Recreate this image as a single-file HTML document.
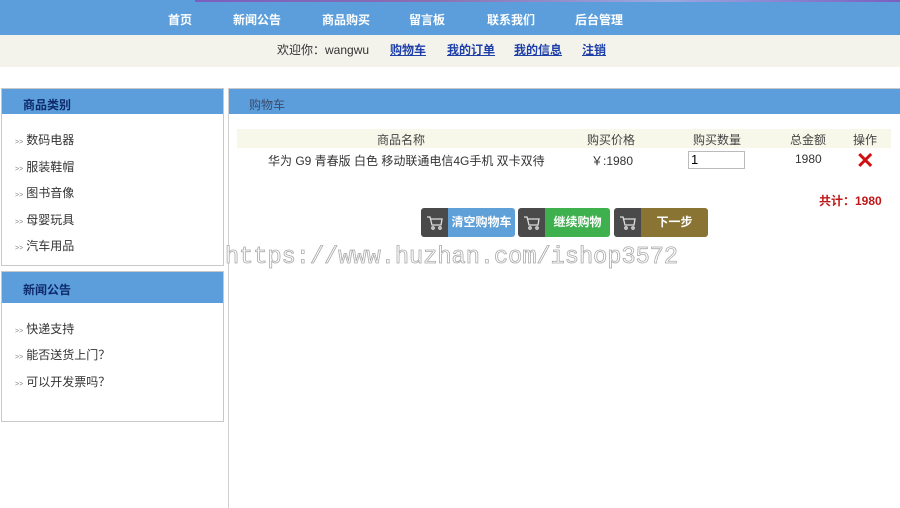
<!DOCTYPE html>
<html><head><meta charset="utf-8"><style>
*{margin:0;padding:0;box-sizing:border-box}
body{width:900px;height:508px;background:#fff;position:relative;overflow:hidden;font-family:"Liberation Sans","Noto Sans CJK SC",sans-serif;font-size:12px;color:#333}
.a{position:absolute}
.nav{left:0;top:0;width:900px;height:35px;background:#5b9edb}
.topline{left:195px;top:0;width:705px;height:2px;background:linear-gradient(90deg,#7a5fc0,#8a6fb0,#9aa9e0,#7a5fc0)}
.nav span{position:absolute;top:11px;color:#fff;font-weight:bold;font-size:12px}
.bar{left:0;top:35px;width:900px;height:32px;background:#f3f3ec}
.bar span{position:absolute;top:6px;font-size:12px}
.bar a{color:#1e3fa8;text-decoration:underline;font-weight:bold}
.box{border:1px solid #c8c8c8;background:#fff}
.hd{background:#5b9edb;height:25px;color:#0f2a6b;font-weight:bold;padding:7px 0 0 21px;font-size:12px}
.li{position:absolute;left:15px;font-size:12px;color:#333}
.li i{font-style:normal;font-size:7px;color:#888;margin-right:3px}
.th{position:absolute;top:131px;font-size:12px;color:#444}
.td{position:absolute;top:152px;font-size:12px;color:#333}
.btn{position:absolute;top:208px;height:29px;border-radius:3px;overflow:hidden;color:#fff;font-weight:bold;font-size:12px}
.btn .ic{position:absolute;left:0;top:0;width:27px;height:29px;background:#4a4a4a}
.btn .tx{position:absolute;left:27px;right:0;top:0;height:29px;line-height:29px;text-align:center}
</style></head><body>
<div class="a nav">
<span style="left:168px">首页</span><span style="left:233px">新闻公告</span><span style="left:322px">商品购买</span><span style="left:409px">留言板</span><span style="left:487px">联系我们</span><span style="left:575px">后台管理</span>
</div>
<div class="a topline"></div>
<div class="a bar">
<span style="left:277px">欢迎你：wangwu</span>
<span style="left:390px"><a>购物车</a></span>
<span style="left:447px"><a>我的订单</a></span>
<span style="left:514px"><a>我的信息</a></span>
<span style="left:582px"><a>注销</a></span>
</div>

<div class="a box" style="left:1px;top:88px;width:223px;height:178px"><div class="hd">商品类别</div></div>
<div class="li" style="top:131px"><i>&gt;&gt;</i>数码电器</div>
<div class="li" style="top:158px"><i>&gt;&gt;</i>服装鞋帽</div>
<div class="li" style="top:184px"><i>&gt;&gt;</i>图书音像</div>
<div class="li" style="top:211px"><i>&gt;&gt;</i>母婴玩具</div>
<div class="li" style="top:237px"><i>&gt;&gt;</i>汽车用品</div>

<div class="a box" style="left:1px;top:271px;width:223px;height:151px"><div class="hd" style="height:31px;padding-top:9px">新闻公告</div></div>
<div class="li" style="top:320px"><i>&gt;&gt;</i>快递支持</div>
<div class="li" style="top:346px"><i>&gt;&gt;</i>能否送货上门？</div>
<div class="li" style="top:373px"><i>&gt;&gt;</i>可以开发票吗？</div>

<div class="a" style="left:228px;top:88px;width:1px;height:420px;background:#d0d0d0"></div>
<div class="a" style="left:229px;top:88px;width:671px;height:26px;background:#5b9edb;border-top:1px solid #c8c8c8"><span style="position:absolute;left:20px;top:7px;color:#3a4a6a">购物车</span></div>

<div class="a" style="left:237px;top:129px;width:654px;height:19px;background:#f7f7ea"></div>
<div class="th" style="left:377px">商品名称</div>
<div class="th" style="left:587px">购买价格</div>
<div class="th" style="left:693px">购买数量</div>
<div class="th" style="left:790px">总金额</div>
<div class="th" style="left:853px">操作</div>
<div class="td" style="left:268px">华为 G9 青春版 白色 移动联通电信4G手机 双卡双待</div>
<div class="td" style="left:591px">￥:1980</div>
<div class="a" style="left:688px;top:151px;width:57px;height:18px;border:1px solid #bbb;font-size:13px;padding-left:2px;line-height:16px;color:#000">1</div>
<div class="td" style="left:795px">1980</div>
<div class="a" style="left:856px;top:150px;color:#d01010;font-size:22px;font-weight:bold;line-height:22px">✕</div>
<div class="a" style="left:819px;top:192px;color:#c01818;font-weight:bold;font-size:12px">共计：1980</div>

<div class="btn" style="left:421px;width:94px"><div class="ic"></div><div class="tx" style="background:#5fa0d8">清空购物车</div></div>
<div class="btn" style="left:518px;width:92px"><div class="ic"></div><div class="tx" style="background:#3eb04e">继续购物</div></div>
<div class="btn" style="left:614px;width:94px"><div class="ic"></div><div class="tx" style="background:#8a7434">下一步</div></div>
<svg class="a" style="left:425px;top:214px" width="20" height="18" viewBox="0 0 20 18" fill="none" stroke="#ddd" stroke-width="1.3"><path d="M2 3h3l2 8h9l1-6H6"/><circle cx="8" cy="14" r="1.2"/><circle cx="15" cy="14" r="1.2"/></svg>
<svg class="a" style="left:522px;top:214px" width="20" height="18" viewBox="0 0 20 18" fill="none" stroke="#ddd" stroke-width="1.3"><path d="M2 3h3l2 8h9l1-6H6"/><circle cx="8" cy="14" r="1.2"/><circle cx="15" cy="14" r="1.2"/></svg>
<svg class="a" style="left:618px;top:214px" width="20" height="18" viewBox="0 0 20 18" fill="none" stroke="#ddd" stroke-width="1.3"><path d="M2 3h3l2 8h9l1-6H6"/><circle cx="8" cy="14" r="1.2"/><circle cx="15" cy="14" r="1.2"/></svg>

<div class="a" style="left:225px;top:244px;font-family:'Liberation Mono',monospace;font-size:23.6px;color:#fff;-webkit-text-stroke:0.8px #aaa">https://www.huzhan.com/ishop3572</div>
</body></html>
